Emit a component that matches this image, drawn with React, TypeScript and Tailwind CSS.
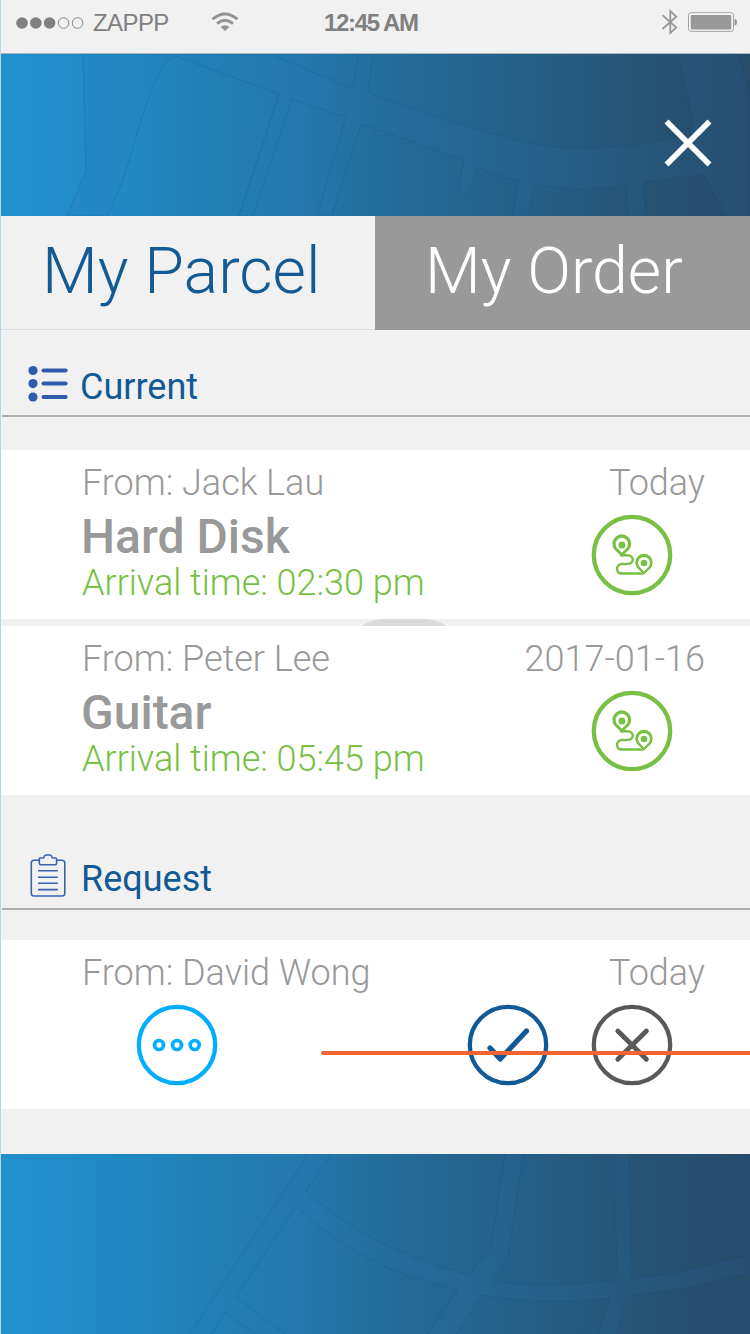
import React from "react";

const ROBOTO = "font-['Roboto','Noto_Sans',sans-serif]";

function SignalDots() {
  return (
    <svg className="block" width="70" height="14" viewBox="0 0 70 14">
      {[7, 20.8, 34.6].map((x) => (
        <circle key={x} cx={x} cy="7" r="5.8" fill="#808080" />
      ))}
      {[48.6, 62.6].map((x) => (
        <circle key={x} cx={x} cy="7" r="5.3" fill="none" stroke="#808080" strokeWidth="0.9" />
      ))}
    </svg>
  );
}

function WifiIcon() {
  return (
    <svg className="block" width="28" height="20" viewBox="0 0 28 20">
      <g fill="none" stroke="#929292" strokeWidth="2.8">
        <path d="M1.5 7.2 Q14 -3.2 26.5 7.2" />
        <path d="M6 11.6 Q14 5 22 11.6" />
      </g>
      <path d="M9.6 15 Q14 11.6 18.4 15 L14 19 Z" fill="#929292" />
    </svg>
  );
}

function BluetoothIcon() {
  return (
    <svg className="block" width="18" height="26" viewBox="0 0 18 26">
      <path d="M1.5 6.2 15.3 18.5 9.3 24V2L15.3 7.7 1.5 20" fill="none" stroke="#999999" strokeWidth="1.8" />
    </svg>
  );
}

function BatteryIcon() {
  return (
    <svg className="block" width="50" height="20" viewBox="0 0 50 20">
      <rect x="0.5" y="0.7" width="45" height="18.6" rx="2.6" fill="#f8f8f8" stroke="#999999" strokeWidth="0.9" />
      <rect x="2.7" y="2.9" width="40.6" height="14.5" rx="0.8" fill="#999999" />
      <path d="M46.5 7 Q49 7.3 49 10.2 T46.5 13.8 Z" fill="#999999" />
    </svg>
  );
}

function StatusBar() {
  return (
    <div className="flex h-[54px] border-b border-[#a9b5bb] bg-[#f1f1f1] pl-[14px] pt-[10px] font-['Liberation_Sans',sans-serif] text-[24px] leading-[26px] text-[#808080]">
      <div className="w-[78px] pt-[6px]">
        <SignalDots />
      </div>
      <div className="w-[118px] whitespace-nowrap tracking-[-0.6px]">ZAPPP</div>
      <div className="w-[113px] pt-[2px]">
        <WifiIcon />
      </div>
      <div className="w-[337px] whitespace-nowrap font-bold tracking-[-1.35px]">12:45 AM</div>
      <div className="-mt-[1px] w-[27px]">
        <BluetoothIcon />
      </div>
      <div className="pt-[2px]">
        <BatteryIcon />
      </div>
    </div>
  );
}

const GRADIENT =
  "bg-[linear-gradient(90deg,#2191ce_0%,#2187bf_19%,#2180b5_27%,#2478ad_40%,#236f9c_50%,#246591_60%,#255c83_74%,#265273_88%,#274b6b_100%)]";

function HeaderMap() {
  return (
    <svg className="block" width="749" height="162" viewBox="1 54 749 162">
      <path
        d="M83 54 86 171 67 216H108L122 182C135 145 151 75 171 57Q174 55 178 57L279 94 239 216H253L292 99 346 117 317 216H332L361 124Q410 140 464 161L459 184Q458 192 465 193Q470 192 472 186L477 167Q498 177 518 180L513 216H530L534 184Q582 193 626 185L628 216H645L644 182 704 175 726 216H750V96L738 54H678L693 121 690 136 Q620 149 572 149 Q510 145 375 95L368 92 373 54H359L353 89 270 54Z"
        fill="#2f78b8"
        fillOpacity="0.11"
        stroke="#103f69"
        strokeOpacity="0.17"
        strokeWidth="1"
      />
    </svg>
  );
}

function FooterMap() {
  return (
    <svg className="block" width="749" height="180" viewBox="1 1154 749 180">
      <path
        d="M309 1153 189 1335H211L225 1313 256 1335H286L236 1297 296 1206Q360 1269 458 1290L427 1335H456L482 1295Q546 1306 610 1298L598 1335H617L627 1296Q690 1290 751 1273V1254Q690 1273 631 1279L632 1273 629 1153H614L617 1272 615 1280Q540 1290 492 1280L508 1256 523 1153H505L491 1247 470 1275Q365 1247 306 1191L332 1153Z"
        fill="#2f78b8"
        fillOpacity="0.11"
        stroke="#103f69"
        strokeOpacity="0.17"
        strokeWidth="1"
      />
    </svg>
  );
}

function CloseIcon() {
  return (
    <svg className="block" width="48" height="48" viewBox="0 0 48 48">
      <path d="M2.5 2.5 45.5 45.5M45.5 2.5 2.5 45.5" stroke="#ffffff" strokeWidth="5.6" />
    </svg>
  );
}

function ListIcon() {
  return (
    <svg className="block" width="40" height="38" viewBox="0 0 40 38">
      {[5.5, 18.6, 32].map((y) => (
        <g key={y}>
          <circle cx="5" cy={y} r="4.6" fill="#305bac" />
          <path d={`M15.5 ${y}H37.6`} stroke="#305bac" strokeWidth="4" strokeLinecap="round" />
        </g>
      ))}
    </svg>
  );
}

function ClipboardIcon() {
  return (
    <svg className="block" width="37" height="44" viewBox="0 0 37 44" fill="none" stroke="#3a61b0" strokeWidth="1.6">
      <path d="M9.3 6.2H4Q1.3 6.2 1.3 9V39.5Q1.3 42 4 42H32Q34.8 42 34.8 39.5V9Q34.8 6.2 32 6.2H27" />
      <path d="M9.3 4.8Q9.3 4 10.2 4H13Q14 4 14.3 2.6Q14.8 1 16.2 1H19.8Q21.3 1 21.7 2.6Q22 4 23 4H25.6Q26.6 4 26.6 4.8V9.3Q26.6 10.8 25 10.8H11Q9.3 10.8 9.3 9.3Z" />
      <path d="M8 16.8H27.8M8 23.2H27.8M8 29.3H27.8M8 35.6H27.8" />
    </svg>
  );
}

function RouteIcon() {
  return (
    <svg className="block" width="82" height="82" viewBox="0 0 82 82">
      <circle cx="41" cy="41" r="38.2" fill="none" stroke="#77c043" strokeWidth="4.3" />
      <path
        fillRule="evenodd"
        fill="#77c043"
        d="M30.8 42.8 23.6 35.8A9.4 9.4 0 1 1 38 35.8ZM30.8 38.8 35 34.6A6.2 6.2 0 1 0 26.6 34.6Z"
      />
      <circle cx="30.9" cy="31" r="3.5" fill="#77c043" />
      <path
        d="M29 41.2H36.5C43.5 41.2 43.5 50 36.5 50H31C24.4 50 24.4 59.6 31 59.6H52.5"
        fill="none"
        stroke="#77c043"
        strokeWidth="2.5"
      />
      <path
        fillRule="evenodd"
        fill="#77c043"
        d="M53 60.6 46.6 54.4A8.7 8.7 0 1 1 59.4 54.4ZM53 57.4 57.2 53.2A6 6 0 1 0 48.8 53.2Z"
      />
      <circle cx="53" cy="49" r="3.3" fill="#77c043" />
    </svg>
  );
}

function MoreIcon() {
  return (
    <svg className="block" width="82" height="82" viewBox="0 0 82 82" fill="none" stroke="#00adff">
      <circle cx="41" cy="41" r="38.2" strokeWidth="4.3" />
      {[23, 41, 58.7].map((x) => (
        <circle key={x} cx={x} cy="41" r="4.5" strokeWidth="3.7" />
      ))}
    </svg>
  );
}

function AcceptIcon() {
  return (
    <svg className="block" width="82" height="82" viewBox="0 0 82 82" fill="none" stroke="#125a96">
      <circle cx="41" cy="41" r="38.2" strokeWidth="4.3" />
      <path d="M23 44 33.2 55 59.5 27" strokeWidth="5.2" strokeLinecap="round" strokeLinejoin="round" />
    </svg>
  );
}

function RejectIcon() {
  return (
    <svg className="block" width="82" height="82" viewBox="0 0 82 82" fill="none" stroke="#58595b">
      <circle cx="41" cy="41" r="38.2" strokeWidth="4.3" />
      <path d="M26.8 27 55.4 55.3M55.4 27 26.8 55.3" strokeWidth="4.8" strokeLinecap="round" />
    </svg>
  );
}

function ParcelCard(props: { from: string; date: string; item: string; arrival: string }) {
  return (
    <div className="flex h-[169px] justify-between bg-white pl-[81px] pr-[45px] pt-[13px]">
      <div className="whitespace-nowrap">
        <div className="text-[36px] font-light leading-[40px] text-[#999999]">{props.from}</div>
        <div className="-ml-[1px] mt-[9px] text-[48px] font-medium leading-[50px] text-[#999999]">{props.item}</div>
        <div className="text-[36px] font-light leading-[42px] text-[#77c043]">{props.arrival}</div>
      </div>
      <div className="flex flex-col items-end whitespace-nowrap">
        <div className="text-[36px] font-light leading-[40px] text-[#999999]">{props.date}</div>
        <div className="mr-[32px] mt-[11px]">
          <RouteIcon />
        </div>
      </div>
    </div>
  );
}

export default function App() {
  return (
    <div className={`flex h-[1334px] w-[750px] flex-col overflow-hidden border-l border-[#b9d6e7] bg-[#f1f1f1] ${ROBOTO}`}>
      <StatusBar />
      <header className={`relative h-[162px] ${GRADIENT}`}>
        <HeaderMap />
        <button className="absolute left-[663px] top-[65px]" aria-label="Close">
          <CloseIcon />
        </button>
      </header>
      <nav className="flex h-[114px] text-[64.5px] font-light leading-[76px]">
        <div className="w-[374px] whitespace-nowrap border-b border-[#d6dee2] pl-[41px] pt-[17px] text-[#125a96]">My Parcel</div>
        <div className="flex-1 whitespace-nowrap border-l border-[#8f9fa6] bg-[#999999] pl-[49px] pt-[17px] text-white">My Order</div>
      </nav>
      <section className="h-[465px]">
        <div className="ml-[1px] flex h-[87px] border-b-2 border-[#adadad] pl-[26px] pt-[35px] text-[36px] leading-[44px] text-[#125a96]">
          <div className="w-[52px]">
            <ListIcon />
          </div>
          <h2 className="whitespace-nowrap">Current</h2>
        </div>
        <div className="mt-[33px]">
          <ParcelCard from="From: Jack Lau" date="Today" item="Hard Disk" arrival="Arrival time: 02:30 pm" />
          <div className="flex h-[7px] pl-[360px]">
            <svg className="block" width="86" height="7" viewBox="0 0 86 7">
              <path d="M0 7Q10 1 20 0H66Q76 1 86 7Z" fill="#dadada" />
            </svg>
          </div>
          <ParcelCard from="From: Peter Lee" date="2017-01-16" item="Guitar" arrival="Arrival time: 05:45 pm" />
        </div>
      </section>
      <section className="h-[359px]">
        <div className="ml-[1px] flex h-[115px] border-b-2 border-[#adadad] pl-[28px] pt-[59px] text-[36px] leading-[51px] text-[#125a96]">
          <div className="w-[51px]">
            <ClipboardIcon />
          </div>
          <h2 className="whitespace-nowrap">Request</h2>
        </div>
        <div className="relative mt-[30px] h-[169px] bg-white pt-[13px]">
          <div className="flex justify-between whitespace-nowrap pl-[81px] pr-[45px] text-[36px] font-light leading-[40px] text-[#999999]">
            <span>From: David Wong</span>
            <span>Today</span>
          </div>
          <div className="mt-[11px] flex pl-[135px]">
            <MoreIcon />
            <div className="ml-[249px]">
              <AcceptIcon />
            </div>
            <div className="ml-[42px]">
              <RejectIcon />
            </div>
          </div>
          <div className="absolute left-[320px] right-0 top-[111px] h-[4px] rounded-l-full bg-[#f06533]" />
        </div>
      </section>
      <footer className={`h-[180px] ${GRADIENT}`}>
        <FooterMap />
      </footer>
    </div>
  );
}
